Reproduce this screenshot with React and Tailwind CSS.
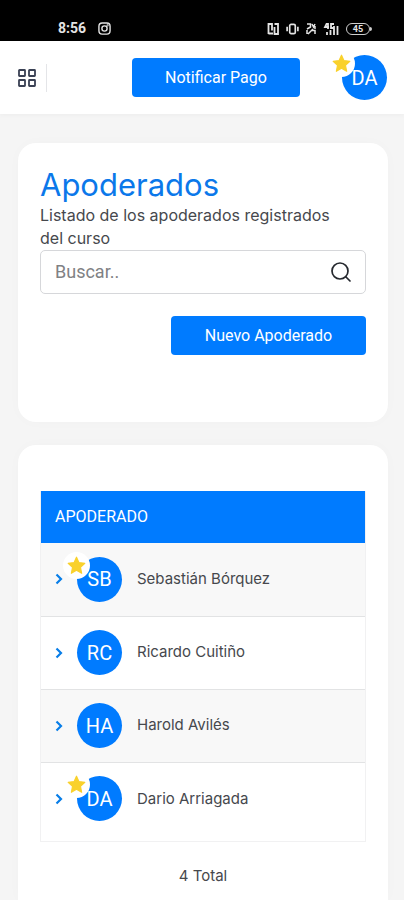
import React from "react";

const people = [
  { initials: "SB", name: "Sebastián Bórquez", star: true },
  { initials: "RC", name: "Ricardo Cuitiño", star: false },
  { initials: "HA", name: "Harold Avilés", star: false },
  { initials: "DA", name: "Dario Arriagada", star: true },
];

function Avatar({ initials, star }) {
  return (
    <span className="relative flex size-[45px] shrink-0 items-center justify-center rounded-full bg-[#007bff] font-['Roboto',sans-serif] text-xl text-white">
      {star && (
        <span className="absolute -top-[5px] -left-[14px] flex size-[27px] items-center justify-center rounded-full bg-white">
          <svg viewBox="0 0 24 24" className="size-[19px]" fill="#f9d12c" aria-hidden="true">
            <path d="M12 1.500l3 6.800 7.500.9-5.500 5 1.500 7.600-6.500-3.800-6.500 3.800L7 14.200l-5.500-5 7.500-.9z" stroke="#f9d12c" strokeWidth="1.500" strokeLinejoin="round" />
          </svg>
        </span>
      )}
      <span className="relative">{initials}</span>
    </span>
  );
}

function StatusBar() {
  return (
    <div className="flex h-[41px] items-end justify-between bg-black pr-8 pb-1 pl-[58px] text-[#e4e4e4]">
      <div className="flex items-center gap-3">
        <span className="font-['Roboto',sans-serif] text-sm font-bold leading-[17px]">8:56</span>
        <svg viewBox="0 0 14 14" className="size-[13px]" fill="none" stroke="currentColor" strokeWidth="1.500" aria-hidden="true">
          <rect x="1" y="1" width="12" height="12" rx="3.500" />
          <circle cx="7" cy="7" r="2.800" />
          <circle cx="10.300" cy="3.700" r=".4" />
        </svg>
      </div>
      <div className="flex items-center gap-[7px] pb-[2px]">
        <svg viewBox="0 0 12 12" className="size-3" fill="none" stroke="currentColor" strokeWidth="1.800" aria-hidden="true">
          <path d="M1.500 11V1H5v6.500M1.500 10.500H6M7.500 1h3.500v10H7.500V4" />
        </svg>
        <svg viewBox="0 0 14 12" className="h-3 w-[13px]" fill="none" stroke="currentColor" strokeWidth="1.800" aria-hidden="true">
          <rect x="4" y="1" width="6" height="10" rx="1.500" />
          <path d="M1.200 3.500v5M12.800 3.500v5" />
        </svg>
        <svg viewBox="0 0 10 12" className="h-3 w-[10px]" fill="none" stroke="currentColor" strokeWidth="1.500" aria-hidden="true">
          <path d="M1 1h3.500v3L1 6M6 1l1.500 3L9 1M1 7v4M2 11l5-5M5 7.500h4V11M9 3v3" />
        </svg>
        <svg viewBox="0 0 16 12" className="h-3 w-4" fill="none" stroke="currentColor" strokeWidth="1.800" aria-hidden="true">
          <path d="M4 0L2 4h4M5 0v6M11 1H8v4h3V3M4 12V9M7.500 12V7M11 12V6M14.500 12V3" />
        </svg>
        <span className="flex items-center">
          <span className="flex h-3 w-6 items-center justify-center rounded-md border border-[#cfcfcf] font-['Roboto',sans-serif] text-[9px] leading-none font-bold">
            45
          </span>
          <span className="h-1 w-[2px] rounded-r bg-[#cfcfcf]" />
        </span>
      </div>
    </div>
  );
}

function Header() {
  return (
    <header className="flex h-[73px] items-center bg-white pr-[17px] pl-[18px] shadow-[0_1px_5px_rgba(0,0,0,0.04)]">
      <button type="button" aria-label="Menú" className="flex h-7 items-center border-r border-[#e4e5e8] pr-[10px]">
        <svg viewBox="0 0 18 18" className="size-[18px]" fill="none" stroke="#3a4154" strokeWidth="1.800" aria-hidden="true">
          <rect x="1" y="1" width="6" height="6" rx=".5" />
          <rect x="11" y="1" width="6" height="6" rx=".5" />
          <rect x="1" y="11" width="6" height="6" rx=".5" />
          <rect x="11" y="11" width="6" height="6" rx=".5" />
        </svg>
      </button>
      <div className="flex flex-1 justify-end pr-[42px]">
        <button type="button" className="h-[39px] w-[168px] rounded bg-[#007bff] font-['Roboto',sans-serif] text-base text-white">
          Notificar Pago
        </button>
      </div>
      <Avatar initials="DA" star />
    </header>
  );
}

export default function App() {
  return (
    <div className="flex min-h-screen flex-col bg-[#f5f5f5] font-['Inter',sans-serif] text-[#46484d]">
      <StatusBar />
      <Header />
      <main className="flex flex-1 flex-col gap-[23px] pt-[29px] pr-4 pl-[18px]">
        <section className="rounded-[18px] bg-white px-[22px] pt-[26px] pb-[67px] shadow-[0_0_14px_rgba(0,0,0,0.02)]">
          <h1 className="text-[31px] leading-8 text-[#0b78ea]">Apoderados</h1>
          <p className="pt-[3px] pr-6 text-base leading-[23px]">Listado de los apoderados registrados del curso</p>
          <div className="flex h-11 items-center rounded-[5px] border border-[#d6d7da] pr-[13px] pl-[14px]">
            <input
              type="text"
              aria-label="Buscar"
              placeholder="Buscar.."
              className="min-w-0 flex-1 bg-transparent font-['Roboto',sans-serif] text-lg outline-none placeholder:text-[#808184]"
            />
            <svg viewBox="0 0 22 22" className="size-[22px]" fill="none" stroke="#25282e" strokeWidth="1.700" strokeLinecap="round" aria-hidden="true">
              <circle cx="10" cy="10" r="8" />
              <path d="M16 16l4 4" />
            </svg>
          </div>
          <div className="flex justify-end pt-[22px]">
            <button type="button" className="h-[39px] w-[195px] rounded bg-[#007bff] font-['Roboto',sans-serif] text-base text-white">
              Nuevo Apoderado
            </button>
          </div>
        </section>

        <section className="flex-1 rounded-t-[18px] bg-white px-[22px] pt-[46px] shadow-[0_0_14px_rgba(0,0,0,0.02)]">
          <div className="border-x border-b border-[#f1f1f2] pb-[6px]">
            <table className="w-full border-collapse">
              <thead>
                <tr className="h-[52px] bg-[#007bff]">
                  <th scope="col" className="px-[14px] text-left font-['Roboto',sans-serif] text-base font-normal text-white">
                    APODERADO
                  </th>
                </tr>
              </thead>
              <tbody>
                {people.map((p) => (
                  <tr key={p.name} className="h-[73px] border-b border-[#e2e3e4] odd:bg-[#f8f8f8] last:border-0">
                    <td className="px-[14px]">
                      <div className="flex items-center">
                        <button type="button" aria-label={`Ver ${p.name}`} className="mr-[14px] flex">
                          <svg viewBox="0 0 8 12" className="h-3 w-2" fill="none" stroke="#087ee8" strokeWidth="2.200" aria-hidden="true">
                            <path d="M1.500 1.500L6 6l-4.500 4.500" />
                          </svg>
                        </button>
                        <Avatar initials={p.initials} star={p.star} />
                        <span className="pl-[15px] text-[15px]">{p.name}</span>
                      </div>
                    </td>
                  </tr>
                ))}
              </tbody>
            </table>
          </div>
          <p className="pt-[22px] text-center text-[15px] leading-[23px]">4 Total</p>
        </section>
      </main>
    </div>
  );
}
